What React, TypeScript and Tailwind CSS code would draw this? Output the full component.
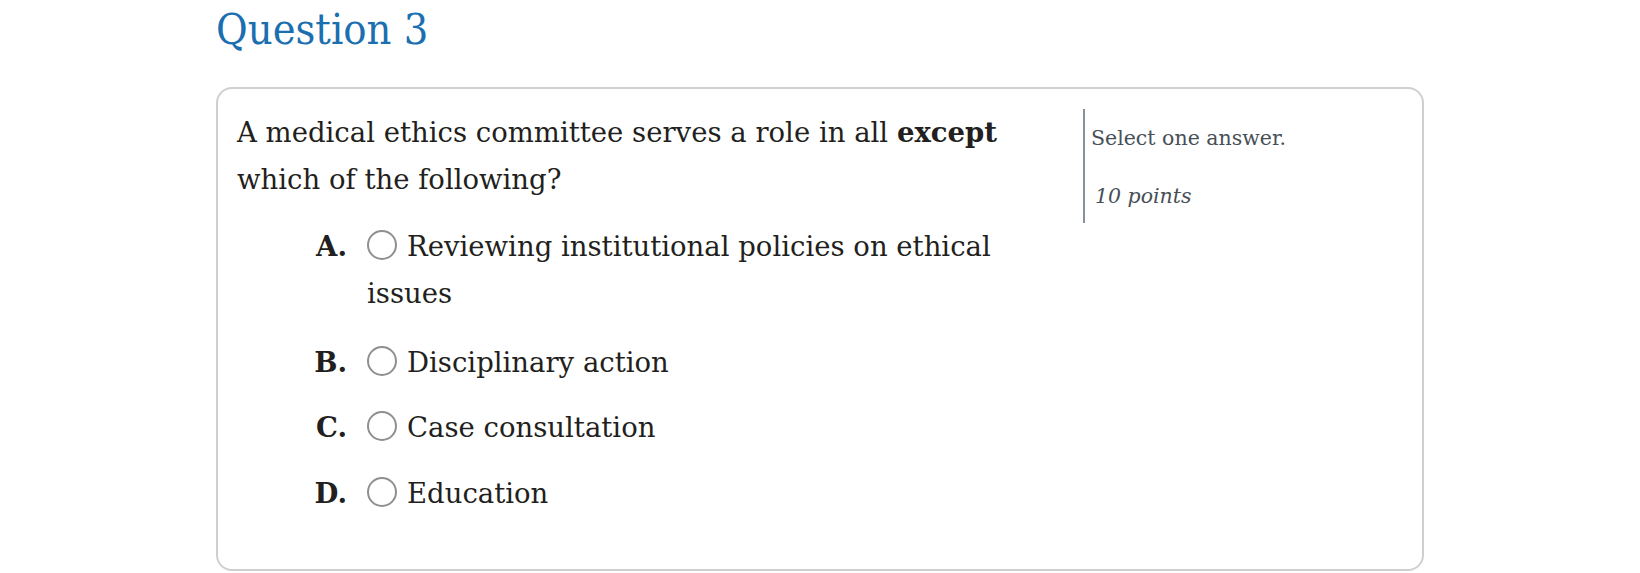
const options = [
  { key: 'A.', text: 'Reviewing institutional policies on ethical issues' },
  { key: 'B.', text: 'Disciplinary action' },
  { key: 'C.', text: 'Case consultation' },
  { key: 'D.', text: 'Education' },
]

export default function App() {
  return (
    <div className="min-h-screen bg-white font-['DejaVu_Serif',serif] text-[#231f20]">
      <div className="mx-auto w-[1208px]">
        <h2 className="pt-[4px] h-[87px] font-['DejaVu_Serif_Condensed','DejaVu_Serif',serif] text-[43px] leading-[50px] text-[#1b6fb0]">
          Question 3
        </h2>

        <div className="flex border-2 border-[#cfcfcf] rounded-[16px] h-[484px]">
          {/* question + choices */}
          <div className="w-[865px] shrink-0 pl-[19px] pr-[20px] pt-[20px] text-[27.5px] leading-[47px]">
            <p>
              A medical ethics committee serves a role in all <b>except</b> which of the following?
            </p>
            <div className="mt-[20px] flex flex-col">
              {options.map((o, i) => (
                <div key={o.key} className={i === 0 ? 'flex' : i === 1 ? 'flex mt-[21.5px]' : 'flex mt-[18.5px]'}>
                  <span className="w-[110px] shrink-0 text-right font-bold">{o.key}</span>
                  <div className="ml-[20px] flex-1">
                    <span className="inline-block align-[-4px] w-[30px] h-[30px] rounded-full border-[2.5px] border-[#8f8f8f] mr-[10px]" />
                    {o.text}
                  </div>
                </div>
              ))}
            </div>
          </div>

          {/* meta */}
          <div className="mt-[20px] h-[114px] border-l-2 border-[#8a9099] pl-[6px] text-[#474f57]">
            <div className="text-[20.5px] leading-[30px] pt-[14px]">Select one answer.</div>
            <div className="text-[20.5px] leading-[30px] mt-[28px] pl-[4px] italic">10 points</div>
          </div>
        </div>
      </div>
    </div>
  )
}
